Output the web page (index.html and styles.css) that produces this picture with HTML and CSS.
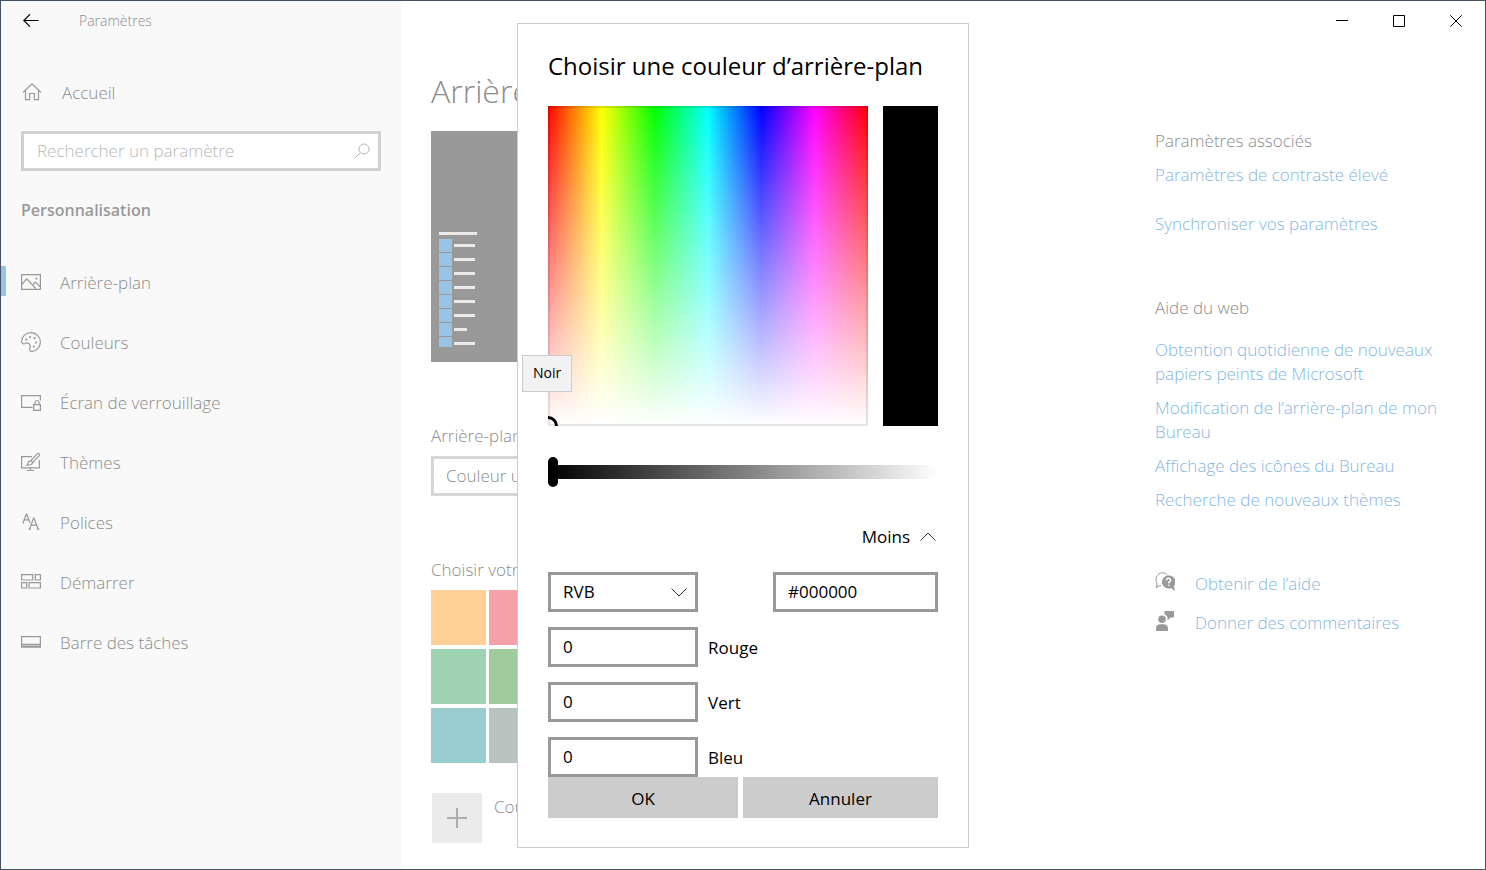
FILE: index.html
```html
<!DOCTYPE html>
<html lang="fr">
<head>
    <meta charset="UTF-8">
    <meta name="viewport" content="width=device-width, initial-scale=1.0">
    <title>Paramètres</title>
    <link rel="stylesheet" href="styles.css">
</head>
<body>
    <div class="window">
        <div class="sidebar">
            <header class="titlebar">
                <button type="button" class="back" aria-label="Retour">
                    <svg width="16" height="14" viewBox="0 0 16 14"><path d="M15.5 6.5H1M7 .3.8 6.5 7 12.7" /></svg>
                </button>
                <span>Paramètres</span>
            </header>

            <a href="#" class="home">
                <svg class="icon" width="20" height="20" viewBox="0 0 20 20"><path d="M1.2 10.2 10 1.8l8.8 8.4M3.5 8.5v9.2h4.2v-6.2h4.6v6.2h4.2V8.5" /></svg>
                Accueil
            </a>

            <div class="search">
                <input type="text" placeholder="Rechercher un paramètre" aria-label="Rechercher un paramètre">
                <svg width="16" height="16" viewBox="0 0 16 16"><circle cx="10" cy="6" r="5" /><path d="M6.4 9.6.5 15.5" /></svg>
            </div>

            <h2>Personnalisation</h2>

            <nav>
                <a href="#" class="active">
                    <svg class="icon" width="20" height="20" viewBox="0 0 20 20"><path d="M.6 2.6h18.8v14.8H.6zM.8 12.5l5-5.6 9 9.6M11.5 13l3-3 4.7 4.8" /><circle cx="15.5" cy="6.5" r=".5" /></svg>
                    Arrière-plan
                </a>
                <a href="#">
                    <svg class="icon" width="20" height="20" viewBox="0 0 20 20"><path d="M.6 9.5C.8 4.4 5 .6 10 .6c5.3 0 9.4 4.2 9.4 9.4s-4 9.4-8.6 9.4c-1.8 0-2.4-.8-2-2.3.4-1.4.7-2.3.2-3.8-.5-1.6-1.6-2.6-3-2.4-1.6.3-2 1.1-3.3.9C1.3 11.6.6 10.8.6 9.5z" /><g class="dots"><circle cx="5.2" cy="7.6" r="1.1" /><circle cx="9" cy="5" r="1.1" /><circle cx="13.5" cy="6.2" r="1.1" /><circle cx="15" cy="10.5" r="1.1" /><circle cx="12.8" cy="14.5" r="1.1" /></g></svg>
                    Couleurs
                </a>
                <a href="#">
                    <svg class="icon" width="20" height="20" viewBox="0 0 20 20"><path d="M11.5 15.4H.6V3.6h18.8v5M12.6 12.6h6.8v5.8h-6.8zM14 12.5v-2a2 2 0 0 1 4 0v2" /></svg>
                    Écran de verrouillage
                </a>
                <a href="#">
                    <svg class="icon" width="20" height="20" viewBox="0 0 20 20"><path d="M11 4.6H.6v11.2h17.8V8M9.5 16v2.5M6 18.5h7M17.8 1.5c1 .6.9 1.500.2 2.300l-6.200 6.600-2-1.800 6.200-6.400c.6-.7 1.200-1 1.800-.7zM9.600 9c-1.900-.3-2.600 1.200-2.700 2.500-.1.700-.5 1.200-1 1.500 2.500.4 5.600-.3 5.700-2.600" /></svg>
                    Thèmes
                </a>
                <a href="#">
                    <svg class="icon" width="20" height="20" viewBox="0 0 20 20"><path d="M2 11 5.3 2h.4L9 11M3.2 7.8h4.6M1.5 11h1.5M7.5 17.2h2.500M8.500 17.200 12.600 6h.4l4.200 11.200M10 13.200h5.600M15.800 17.200h2.600" /></svg>
                    Polices
                </a>
                <a href="#">
                    <svg class="icon" width="20" height="20" viewBox="0 0 20 20"><path d="M.6 2.6h11.2V8H.6zM14.4 2.6h5V8h-5zM.6 10.6h5V16h-5zM8 10.6h11.4V16H8z" /></svg>
                    Démarrer
                </a>
                <a href="#">
                    <svg class="icon" width="20" height="20" viewBox="0 0 20 20"><path d="M.6 4.6h18.8v10.6H.6zM.6 12.4h18.8M.6 14h18.8" /></svg>
                    Barre des tâches
                </a>
            </nav>
        </div>

        <div class="content">
            <header class="controls">
                <button type="button" aria-label="Réduire"><svg width="12" height="12" viewBox="0 0 12 12"><path d="M0 5.5h12" /></svg></button>
                <button type="button" aria-label="Agrandir"><svg width="12" height="12" viewBox="0 0 12 12"><path d="M.5.5h11v11H.5z" /></svg></button>
                <button type="button" aria-label="Fermer"><svg width="12" height="12" viewBox="0 0 12 12"><path d="m.3.3 11.4 11.4M11.7.3.3 11.7" /></svg></button>
            </header>

            <div class="columns">
                <main>
                    <h1>Arrière-plan</h1>
                    <svg class="preview" width="411" height="231" viewBox="0 0 411 231">
                        <rect class="screen" width="411" height="231" />
                        <path class="tiles" d="M8 108h13v13H8zM8 122h13v13H8zM8 136h13v13H8zM8 150h13v13H8zM8 164h13v13H8zM8 178h13v13H8zM8 192h13v13H8zM8 206h13v10H8z" />
                        <path class="lines" d="M8 101h38v3H8zM23 113h21v3H23zM23 127h21v3H23zM23 141h21v3H23zM23 155h21v3H23zM23 169h21v3H23zM23 183h21v3H23zM23 197h13v3H23zM23 211h21v3H23z" />
                    </svg>

                    <label for="background">Arrière-plan</label>
                    <select id="background" class="background">
                        <option>Couleur unie</option>
                    </select>

                    <p>Choisir votre couleur</p>
                    <div class="swatches">
                        <button type="button" class="orange" aria-label="Orange"></button>
                        <button type="button" class="red" aria-label="Rouge"></button>
                        <button type="button" class="mint" aria-label="Menthe"></button>
                        <button type="button" class="green" aria-label="Vert"></button>
                        <button type="button" class="teal" aria-label="Bleu-vert"></button>
                        <button type="button" class="grey" aria-label="Gris"></button>
                    </div>

                    <div class="custom">
                        <button type="button" aria-labelledby="custom-label"><svg width="20" height="20" viewBox="0 0 20 20"><path d="M0 10h20M10 0v20" /></svg></button>
                        <span id="custom-label">Couleur</span>
                    </div>
                </main>

                <aside>
                    <section>
                        <h3>Paramètres associés</h3>
                        <ul class="related">
                            <li><a href="#">Paramètres de contraste élevé</a></li>
                            <li><a href="#">Synchroniser vos paramètres</a></li>
                        </ul>
                    </section>
                    <section>
                        <h3>Aide du web</h3>
                        <ul class="help">
                            <li><a href="#">Obtention quotidienne de nouveaux papiers peints de Microsoft</a></li>
                            <li><a href="#">Modification de l’arrière-plan de mon Bureau</a></li>
                            <li><a href="#">Affichage des icônes du Bureau</a></li>
                            <li><a href="#">Recherche de nouveaux thèmes</a></li>
                        </ul>
                    </section>
                    <ul class="support">
                        <li>
                            <svg width="20" height="20" viewBox="0 0 20 20"><path class="line" d="M6 13.2 1 15.5l1.3-3.6C-.6 7.5 1.5 1 7.5.8c2.3 0 4 1 5 2.4" /><path d="M13.5 3.5a6.5 6.5 0 1 0 2.7 12.4l3.6 3.3-.8-5.1A6.5 6.5 0 0 0 13.5 3.5z" /><path class="mark" d="M11.5 8.2c.1-2.6 4.3-2.4 4 .1-.2 1.4-1.8 1.3-1.9 3.1M13.6 12.7v1.4" /></svg>
                            <a href="#">Obtenir de l’aide</a>
                        </li>
                        <li>
                            <svg width="20" height="20" viewBox="0 0 20 20"><circle cx="7" cy="8.3" r="3.8" /><path d="M1 20v-2.5c0-3 2-4.3 4.5-4.3h3c2.6 0 4.5 1.3 4.5 4.3V20zM9.5 0H19v6.5h-3.5l-3 3V6.5C12 4.8 11 4 9.5 3.5z" /></svg>
                            <a href="#">Donner des commentaires</a>
                        </li>
                    </ul>
                </aside>
            </div>
        </div>
    </div>

    <div class="overlay">
        <form class="dialog" role="dialog" aria-labelledby="dialog-title">
            <h2 id="dialog-title">Choisir une couleur d’arrière-plan</h2>

            <div class="picker">
                <div class="spectrum">
                    <svg class="cursor" width="10" height="10" viewBox="0 0 10 10"><circle cx="0" cy="10" r="8.5" /></svg>
                    <span class="tooltip">Noir</span>
                </div>
                <div class="current"></div>
            </div>

            <input type="range" class="brightness" min="0" max="100" value="0" aria-label="Luminosité">

            <button type="button" class="less">
                Moins
                <svg width="16" height="10" viewBox="0 0 16 10"><path d="M.5 8.5 8 1l7.5 7.5" /></svg>
            </button>

            <div class="row">
                <div class="select">
                    <select aria-label="Modèle de couleur">
                        <option>RVB</option>
                        <option>TSV</option>
                    </select>
                    <svg width="16" height="10" viewBox="0 0 16 10"><path d="M.5 1.5 8 9l7.5-7.5" /></svg>
                </div>
                <input type="text" class="hex" value="#000000" aria-label="Hexadécimal">
            </div>
            <div class="channel">
                <input type="text" id="red" value="0">
                <label for="red">Rouge</label>
            </div>
            <div class="channel">
                <input type="text" id="green" value="0">
                <label for="green">Vert</label>
            </div>
            <div class="channel">
                <input type="text" id="blue" value="0">
                <label for="blue">Bleu</label>
            </div>

            <div class="actions">
                <button type="button">OK</button>
                <button type="button">Annuler</button>
            </div>
        </form>
    </div>
</body>
</html>
```
FILE: styles.css
```css
*, *::after, *::before {
    box-sizing: border-box;
}

body {
    margin: 0;
    font-family: 'Segoe UI', 'Open Sans', 'Noto Sans', sans-serif;
    font-size: 17px;
    line-height: 24px;
    color: #8c8c8c;
    background-color: white;
}

h1, h2, h3, p, ul {
    margin: 0;
    padding: 0;
    font-size: 17px;
    font-weight: inherit;
}

ul {
    list-style: none;
}

a {
    color: #84b8df;
    text-decoration: none;
}

button, input, select {
    margin: 0;
    padding: 0;
    border: none;
    border-radius: 0;
    background: none;
    font: inherit;
    color: inherit;
    outline: none;
}

select {
    appearance: none;
}

svg {
    display: block;
    flex-shrink: 0;
    fill: none;
    stroke: currentColor;
}

.window {
    display: grid;
    grid-template-columns: 400px 1fr;
    min-height: 100vh;
    border: 1px solid #44505e;
    font-weight: 300;
}

/* Sidebar */
.sidebar {
    background-color: #f9f9f9;
}

.titlebar {
    display: flex;
    align-items: center;
    gap: 40px;
    height: 40px;
    padding-left: 22px;
    font-size: 14px;
}

.back {
    color: black;
    stroke-width: 1.2;
}

.home, nav a {
    display: flex;
    align-items: center;
    gap: 19px;
    padding-left: 20px;
    color: #8c8c8c;
}

.home {
    height: 40px;
    margin: 32px 0 18px;
    padding-left: 21px;
    gap: 20px;
}

.icon {
    margin-bottom: 2px;
    stroke: #999;
    stroke-width: 1.2;
}

.dots {
    fill: #999;
    stroke: none;
}

.search {
    display: flex;
    align-items: center;
    height: 40px;
    margin: 0 20px;
    padding: 0 8px 0 13px;
    border: 3px solid #d1d1d1;
    background-color: white;
    color: #b8b8b8;
}

.search input {
    flex: 1;
    min-width: 0;
}

.search input::placeholder {
    color: #b8b8b8;
    opacity: 1;
}

.sidebar h2 {
    margin: 27px 20px 31px;
    font-size: 16px;
    font-weight: 600;
    color: #999;
}

nav a {
    position: relative;
    height: 60px;
}

nav .active::before {
    content: '';
    position: absolute;
    top: 13px;
    left: 0;
    width: 5px;
    height: 30px;
    background-color: #99c3e3;
}

/* Page */
.controls {
    display: flex;
    justify-content: flex-end;
    height: 40px;
    padding-right: 1px;
}

.controls button {
    display: flex;
    align-items: center;
    justify-content: center;
    width: 57px;
    color: black;
}

.columns {
    display: flex;
    justify-content: space-between;
    padding: 0 30px;
}

main {
    width: 411px;
}

h1 {
    margin: 26px 0 16px;
    font-size: 32px;
    line-height: 48px;
}

.preview {
    margin-bottom: 62px;
    stroke: none;
}

.screen {
    fill: #999;
}

.tiles {
    fill: #99c3e3;
}

.lines {
    fill: #ebebeb;
}

.background {
    display: block;
    width: 300px;
    height: 40px;
    margin: 8px 0 62px;
    padding: 0 12px;
    border: 3px solid #d6d6d6;
}

.swatches {
    display: grid;
    grid-template-columns: 55px 55px;
    grid-auto-rows: 55px;
    gap: 4px 3px;
    margin: 8px 0 30px;
}

.orange { background-color: #ffd199; }
.red { background-color: #f6a1a9; }
.mint { background-color: #9fd1b3; }
.green { background-color: #9fcb9f; }
.teal { background-color: #99cdd0; }
.grey { background-color: #b6c3bf; }

.custom {
    display: flex;
    gap: 12px;
    padding-left: 1px;
}

.custom button {
    display: flex;
    align-items: center;
    justify-content: center;
    width: 50px;
    height: 50px;
    background-color: #ebebeb;
    stroke-width: 2;
    color: #adadad;
}

.custom span {
    padding-top: 2px;
}

/* Related links */
aside {
    width: 300px;
    padding-top: 88px;
}

section {
    margin-bottom: 60px;
}

.related, .help {
    display: grid;
}

.related {
    gap: 25px;
    margin-top: 10px;
}

.help {
    gap: 10px;
    margin-top: 18px;
}

.support {
    display: grid;
    gap: 15px;
}

.support li {
    display: flex;
    gap: 20px;
}

.support svg {
    fill: #999;
    stroke: none;
}

.support .line {
    fill: none;
    stroke: #999;
}

.support .mark {
    fill: none;
    stroke: white;
    stroke-width: 1.5;
}

/* Colour dialog */
.overlay {
    position: fixed;
    inset: 0;
    display: flex;
    align-items: center;
    justify-content: center;
}

.dialog {
    width: 452px;
    padding: 26px 30px 29px;
    border: 1px solid #ccc;
    background-color: white;
    color: black;
}

.dialog h2 {
    margin-bottom: 24px;
    font-size: 24px;
    line-height: 32px;
}

.picker {
    display: flex;
    gap: 15px;
}

.spectrum {
    position: relative;
    flex: 1;
    height: 320px;
    background: linear-gradient(transparent, white), linear-gradient(to right, red, yellow, lime, aqua, blue, magenta, red);
    box-shadow: inset 0 0 0 2px rgba(0, 0, 0, 0.1);
}

.cursor {
    position: absolute;
    left: 0;
    bottom: 0;
    stroke-width: 3;
}

.tooltip {
    position: absolute;
    left: -26px;
    bottom: 34px;
    padding: 5px 10px 6px;
    border: 1px solid #ccc;
    background-color: #f2f2f2;
    font-size: 14px;
}

.current {
    width: 55px;
    background-color: black;
}

.brightness {
    display: block;
    appearance: none;
    width: 100%;
    height: 30px;
    margin: 31px 0 38px;
    background: linear-gradient(to right, black, white) center / 100% 14px no-repeat;
}

.brightness::-webkit-slider-thumb {
    appearance: none;
    width: 10px;
    height: 30px;
    border-radius: 5px;
    background-color: black;
}

.less {
    display: flex;
    align-items: center;
    gap: 10px;
    margin: 0 2px 23px auto;
}

.less svg, .select svg {
    stroke: #333;
}

.row {
    display: flex;
    justify-content: space-between;
    margin-bottom: 15px;
}

.select {
    position: relative;
}

.select svg {
    position: absolute;
    top: 15px;
    right: 11px;
    pointer-events: none;
}

.dialog select, .dialog input[type="text"] {
    display: block;
    width: 150px;
    height: 40px;
    padding: 0 12px;
    border: 3px solid #999;
}

.dialog .hex[type="text"] {
    width: 165px;
}

.channel {
    display: flex;
    align-items: center;
    gap: 10px;
}

.channel + .channel {
    margin-top: 15px;
}

.channel label {
    padding-top: 3px;
}

.actions {
    display: grid;
    grid-template-columns: 190px 1fr;
    gap: 5px;
}

.actions button {
    height: 41px;
    padding-top: 3px;
    background-color: #ccc;
}
```
